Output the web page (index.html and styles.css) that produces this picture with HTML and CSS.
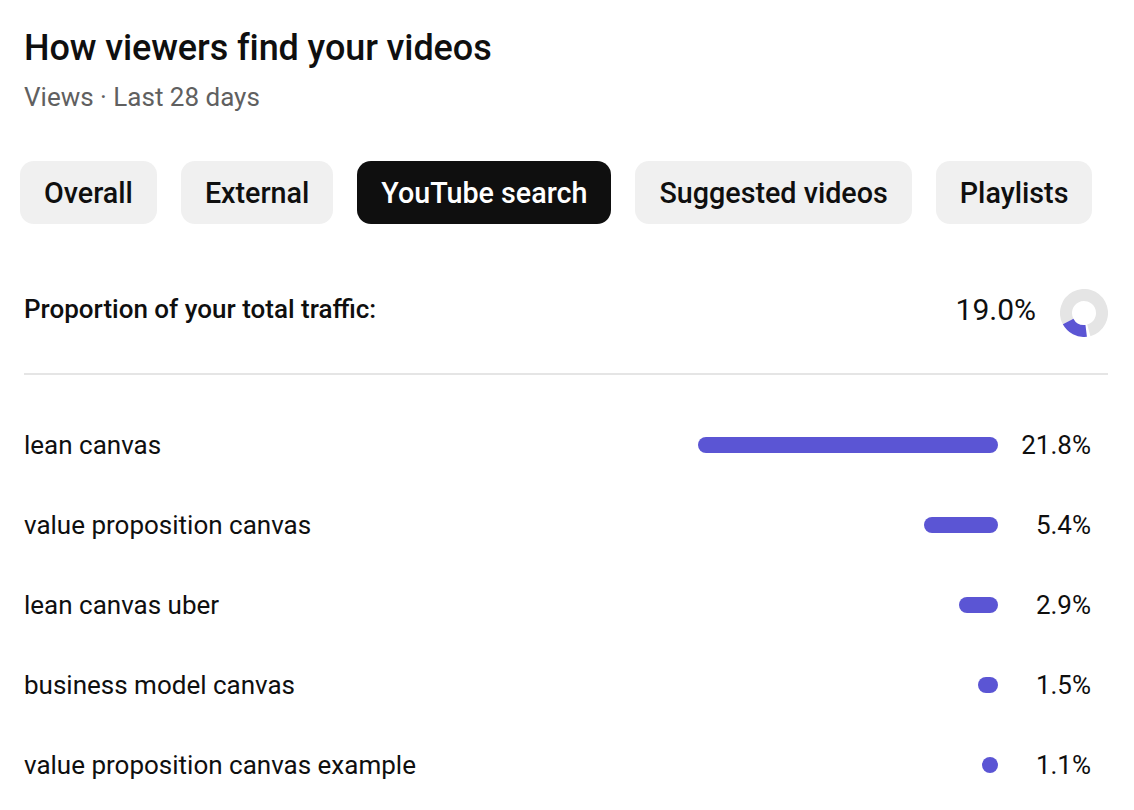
FILE: index.html
```html
<!DOCTYPE html>
<html>
<head>
<meta charset="utf-8">
<link rel="stylesheet" href="styles.css">
</head>
<body>
<div class="card">
  <h1 class="title">How viewers find your videos</h1>
  <div class="subtitle">Views · Last 28 days</div>
  <div class="chips">
    <div class="chip">Overall</div>
    <div class="chip">External</div>
    <div class="chip active">YouTube search</div>
    <div class="chip">Suggested videos</div>
    <div class="chip">Playlists</div>
  </div>
  <div class="proportion">
    <div class="prop-label">Proportion of your total traffic:</div>
    <div class="prop-right">
      <span class="prop-value">19.0%</span>
      <svg class="donut" width="48" height="48" viewBox="0 0 48 48">
        <circle cx="24" cy="24" r="18" fill="none" stroke="#e5e5e5" stroke-width="12"
          stroke-dasharray="88.28 24.82" transform="rotate(152 24 24)"/>
        <circle cx="24" cy="24" r="18" fill="none" stroke="#5b55d4" stroke-width="12"
          stroke-dasharray="21.49 91.61" transform="rotate(83 24 24)"/>
      </svg>
    </div>
  </div>
  <div class="divider"></div>
  <div class="rows">
    <div class="row"><span class="term">lean canvas</span><span class="bar" style="width:300px"></span><span class="pct">21.8%</span></div>
    <div class="row"><span class="term">value proposition canvas</span><span class="bar" style="width:74px"></span><span class="pct">5.4%</span></div>
    <div class="row"><span class="term">lean canvas uber</span><span class="bar" style="width:39px"></span><span class="pct">2.9%</span></div>
    <div class="row"><span class="term">business model canvas</span><span class="bar" style="width:20px"></span><span class="pct">1.5%</span></div>
    <div class="row"><span class="term">value proposition canvas example</span><span class="bar" style="width:16px"></span><span class="pct">1.1%</span></div>
  </div>
</div>
</body>
</html>
```
FILE: styles.css
```css
* { box-sizing: border-box; }
html, body { margin: 0; padding: 0; background: #ffffff; }
body {
  font-family: Roboto, "Liberation Sans", Arial, sans-serif;
  color: #0f0f0f;
}
.card {
  width: 1134px;
  padding: 28px 26px 0 24px;
}
.title {
  margin: 0;
  font-size: 36px;
  line-height: 40px;
  font-weight: 500;
  letter-spacing: -0.1px;
}
.subtitle {
  margin-top: 13px;
  font-size: 26px;
  line-height: 32px;
  color: #606060;
}
.chips {
  display: flex;
  gap: 24px;
  margin-top: 48px;
  margin-left: -4px;
}
.chip {
  height: 63px;
  padding: 0 24px;
  display: flex;
  align-items: center;
  background: #f0f0f0;
  border-radius: 14px;
  font-size: 28.7px;
  font-weight: 500;
  color: #0f0f0f;
}
.chip.active {
  background: #0f0f0f;
  color: #ffffff;
}
.proportion {
  display: flex;
  justify-content: space-between;
  align-items: center;
  margin-top: 61px;
  height: 48px;
}
.prop-label {
  font-size: 26px;
  font-weight: 500;
}
.prop-right {
  display: flex;
  align-items: center;
  gap: 24px;
}
.prop-value {
  font-size: 30px;
}
.donut {
  display: block;
  margin-top: 8px;
}
.divider {
  height: 2px;
  background: #e5e5e5;
  margin-top: 40px;
}
.rows {
  margin-top: 30px;
  padding-right: 17px;
}
.row {
  height: 80px;
  display: flex;
  align-items: center;
}
.term {
  flex: 1;
  font-size: 26px;
}
.bar {
  height: 16px;
  border-radius: 8px;
  background: #5b55d4;
}
.pct {
  width: 93px;
  text-align: right;
  font-size: 26px;
}
```
